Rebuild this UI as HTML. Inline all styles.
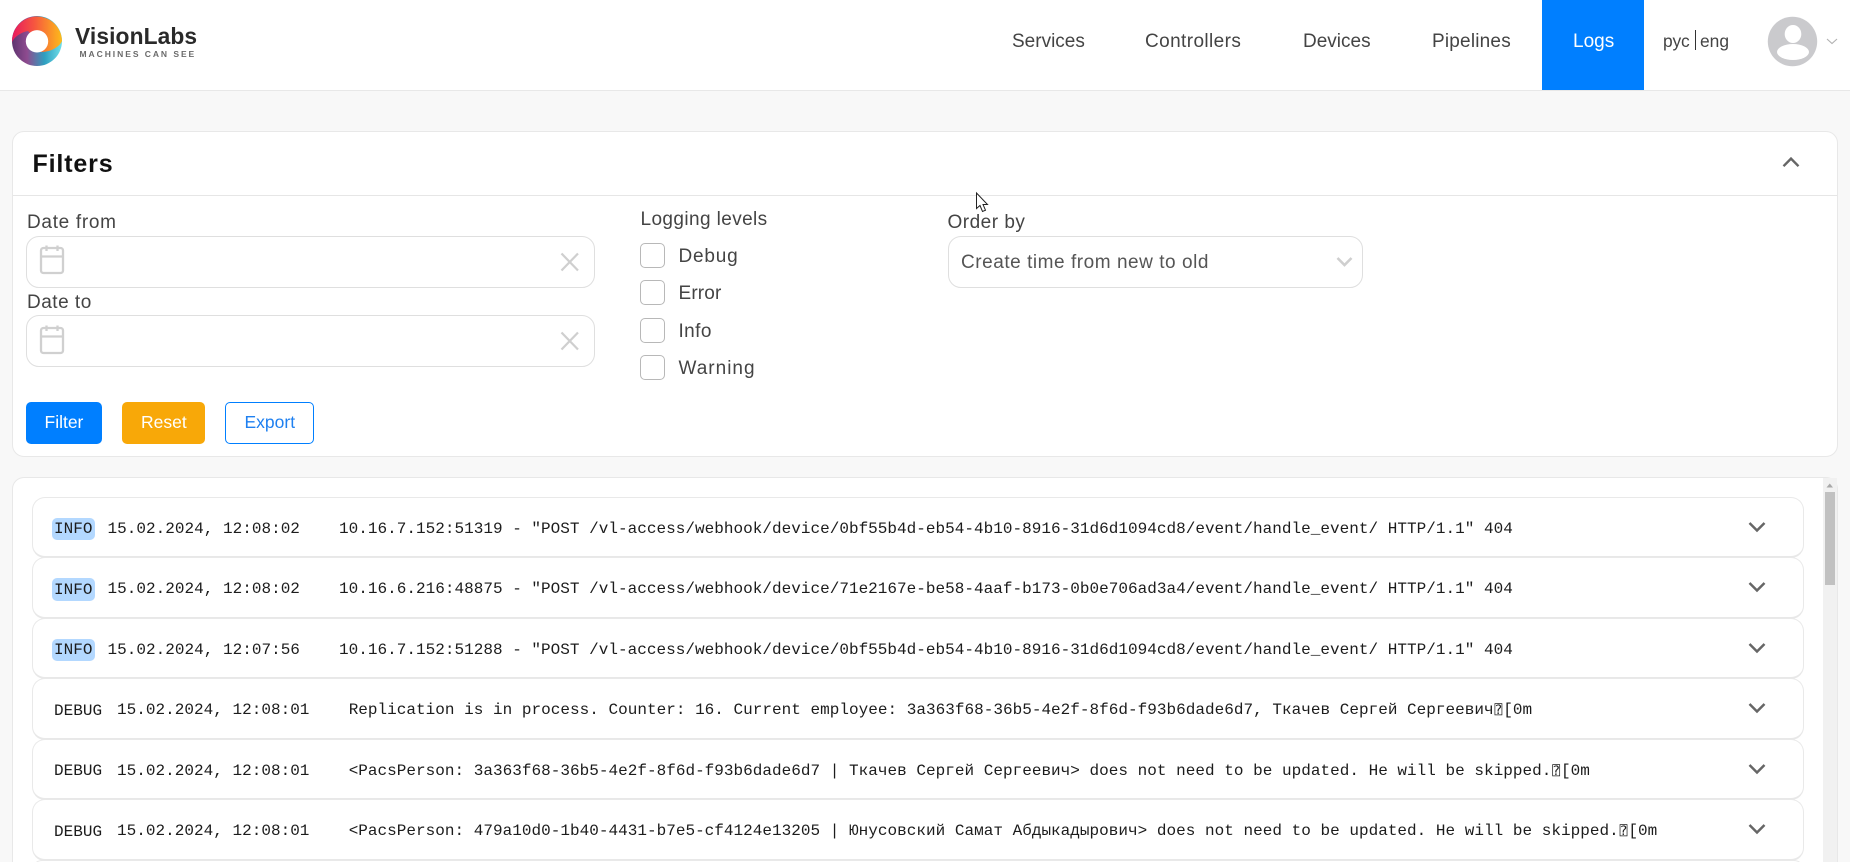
<!DOCTYPE html>
<html lang="en"><head><meta charset="utf-8"><title>VisionLabs Logs</title>
<style>
html,body{margin:0;padding:0;width:1850px;height:862px;overflow:hidden;background:#f8f8f8;font-family:"Liberation Sans","Noto Sans CJK SC",sans-serif;color:#333}
#w{position:relative;width:1850px;height:862px;overflow:hidden;background:#f8f8f8}
.a,.t,.m{position:absolute;white-space:pre}
.a{box-sizing:border-box}
.t{line-height:20px;font-size:19px;color:#444}
.m{line-height:20px;font-size:16px;font-family:"Liberation Mono","DejaVu Sans Mono",monospace;color:#1c1c1c;letter-spacing:.02px}
.q{font-family:"DejaVu Sans Mono",monospace;font-size:13px;width:9.6px;display:inline-block;text-align:center}
.input{border:1.5px solid #dfdfdf;border-radius:13px;background:#fff;height:52px}
.cb{left:640px;width:25px;height:25px;border:1.5px solid #b8b8b8;border-radius:5px;background:#fff}
.row{left:32px;width:1772px;height:61px;background:#fff;border:1.5px solid #e9e9e9;border-bottom:2.5px solid #e8e8e8;border-radius:13px}
.btn{top:402px;height:42px;border-radius:5px}
svg{position:absolute;overflow:visible}
</style></head><body><div id="w">

<div class="a" style="left:0;top:0;width:1850px;height:91px;background:#fff;border-bottom:1.5px solid #e8e8e8"></div>

<svg style="left:0;top:0" width="70" height="80" viewBox="0 0 70 80">
<defs>
<linearGradient id="l1" x1="0" x2="1" y1="0" y2="0"><stop offset="0" stop-color="#5e3470"/><stop offset=".3" stop-color="#8e4b8f"/><stop offset=".65" stop-color="#2f9fc0"/><stop offset="1" stop-color="#6fe0ea"/></linearGradient>
<linearGradient id="l2" x1="0" x2="1" y1="0" y2="0"><stop offset="0" stop-color="#e8185f"/><stop offset=".45" stop-color="#f6573f"/><stop offset="1" stop-color="#fdbb1a"/></linearGradient>
</defs>
<circle cx="37" cy="41" r="25" fill="url(#l1)"/>
<path d="M12 42A25 25 0 0 1 62 41C60 46 52 52 41 52L37 41L28 31C22 32 15 36 12 42Z" fill="url(#l2)"/>
<circle cx="37" cy="41.3" r="11.2" fill="#fff"/>
</svg>
<div class="t" style="left:75px;top:26px;font-size:22.8px;font-weight:bold;color:#2a2a2a;letter-spacing:.1px">VisionLabs</div>
<div class="t" style="left:79.5px;top:44px;font-size:8.5px;font-weight:bold;color:#6a6a6a;letter-spacing:1.95px">MACHINES CAN SEE</div>

<div class="t" style="left:1012px;top:32px">Services</div>
<div class="t" style="left:1145px;top:32px;letter-spacing:.4px">Controllers</div>
<div class="t" style="left:1303px;top:32px">Devices</div>
<div class="t" style="left:1432px;top:32px;letter-spacing:.2px">Pipelines</div>
<div class="a" style="left:1542px;top:0;width:102px;height:90px;background:#007fff"></div>
<div class="t" style="left:1573px;top:32px;color:#fff">Logs</div>
<div class="t" style="left:1663px;top:31px;font-size:17.4px">рус</div>
<div class="a" style="left:1695px;top:30px;width:1px;height:20px;background:#333"></div>
<div class="t" style="left:1700px;top:31px;font-size:17.4px">eng</div>
<svg style="left:1760px;top:10px" width="80" height="60" viewBox="0 0 80 60">
<circle cx="32.5" cy="31.5" r="24.7" fill="#cacacd"/>
<ellipse cx="33" cy="24" rx="8.3" ry="9" fill="#fff"/>
<ellipse cx="33" cy="42" rx="16" ry="8" fill="#fff"/>
<path d="M67 29l5 4.5l5-4.5" fill="none" stroke="#b0b0b0" stroke-width="1.1"/>
</svg>

<!-- Filters card -->
<div class="a" style="left:12px;top:131px;width:1826px;height:326px;background:#fff;border:1.5px solid #e8e8e8;border-radius:12px"></div>
<div class="a" style="left:13px;top:195px;width:1824px;height:1px;background:#e6e6e6"></div>
<div class="t" style="left:32.5px;top:154px;font-size:25px;font-weight:bold;color:#111;letter-spacing:.85px">Filters</div>
<svg style="left:1780px;top:155px" width="24" height="16" viewBox="0 0 24 16"><path d="M3.5 11.2L11 3.6L18.5 11.2" fill="none" stroke="#666" stroke-width="2.4"/></svg>

<div class="t" style="left:27px;top:213px;letter-spacing:.7px">Date from</div>
<div class="a input" style="left:26px;top:236px;width:569px"></div>
<svg style="left:30px;top:241px" width="50" height="40" viewBox="0 0 50 40" fill="none" stroke="#d0d0d0" stroke-width="2.3"><rect x="11" y="7" width="22" height="25" rx="2.5"/><path d="M11 15.5H33M16.5 4.5V10M27.5 4.5V10"/></svg>
<svg style="left:555px;top:248px" width="30" height="30" viewBox="0 0 30 30" fill="none" stroke="#cfcfcf" stroke-width="2.2"><path d="M6.5 5.5L23 22.5M23 5.5L6.5 22.5"/></svg>

<div class="t" style="left:27px;top:293px;letter-spacing:.5px">Date to</div>
<div class="a input" style="left:26px;top:315px;width:569px"></div>
<svg style="left:30px;top:321px" width="50" height="40" viewBox="0 0 50 40" fill="none" stroke="#d0d0d0" stroke-width="2.3"><rect x="11" y="7" width="22" height="25" rx="2.5"/><path d="M11 15.5H33M16.5 4.5V10M27.5 4.5V10"/></svg>
<svg style="left:555px;top:327px" width="30" height="30" viewBox="0 0 30 30" fill="none" stroke="#cfcfcf" stroke-width="2.2"><path d="M6.5 5.5L23 22.5M23 5.5L6.5 22.5"/></svg>

<div class="a btn" style="left:26px;width:76px;background:#007fff"></div>
<div class="t" style="left:44.5px;top:412px;font-size:17.5px;color:#fff">Filter</div>
<div class="a btn" style="left:122px;width:83px;background:#f8a808"></div>
<div class="t" style="left:141px;top:412px;font-size:17.5px;color:#fff">Reset</div>
<div class="a btn" style="left:225px;width:89px;background:#fff;border:1.5px solid #007fff"></div>
<div class="t" style="left:244.5px;top:412px;font-size:17.5px;color:#1f80f0">Export</div>

<div class="t" style="left:640.5px;top:210px;letter-spacing:.4px">Logging levels</div>
<div class="a cb" style="top:243px"></div><div class="t" style="left:678.5px;top:247px;letter-spacing:.8px">Debug</div>
<div class="a cb" style="top:280px"></div><div class="t" style="left:678.5px;top:284px;letter-spacing:.15px">Error</div>
<div class="a cb" style="top:318px"></div><div class="t" style="left:678.5px;top:322px;letter-spacing:.4px">Info</div>
<div class="a cb" style="top:355px"></div><div class="t" style="left:678.5px;top:359px;letter-spacing:1px">Warning</div>

<div class="t" style="left:947.5px;top:213px;letter-spacing:.5px">Order by</div>
<div class="a input" style="left:947.5px;top:236px;width:415.5px"></div>
<div class="t" style="left:961px;top:252.5px;letter-spacing:.54px;color:#555">Create time from new to old</div>
<svg style="left:1331px;top:252px" width="26" height="20" viewBox="0 0 26 20"><path d="M6.5 6L13.5 13L20.5 6" fill="none" stroke="#cfcfcf" stroke-width="2.6"/></svg>

<svg style="left:975px;top:192px" width="16" height="22" viewBox="0 0 16 22"><path d="M1.5 1V16.5L5 13.5L7.5 19.5L10.5 18.2L8 12.5H12.5Z" fill="#fff" stroke="#222" stroke-width="1"/></svg>

<!-- Log panel -->
<div class="a" style="left:12px;top:477px;width:1826px;height:385px;background:#fff;border:1.5px solid #e8e8e8;border-bottom:0;border-radius:12px 12px 0 0"></div>
<div class="a" style="left:1823px;top:478px;width:14px;height:384px;background:#f1f1f1"></div>
<div class="a" style="left:1825px;top:492px;width:10px;height:93px;background:#c1c1c1"></div>
<svg style="left:1823px;top:478px" width="14" height="14" viewBox="0 0 14 14"><path d="M3.5 9.5H10L6.8 5.5Z" fill="#a8a8a8"/></svg>

<div class="a row" style="top:497px"></div>
<div class="a row" style="top:557px;height:62px"></div>
<div class="a row" style="top:618px"></div>
<div class="a row" style="top:678px;height:62px"></div>
<div class="a row" style="top:739px"></div>
<div class="a row" style="top:799px;height:62px"></div>
<div class="a row" style="top:860px;height:10px;border-radius:13px 13px 0 0"></div>

<div class="a" style="left:52px;top:518px;width:43px;height:22px;background:#b3d8ff;border-radius:5px"></div>
<div class="m" style="left:54px;top:519px">INFO</div>
<div class="m" style="left:107.5px;top:519px">15.02.2024, 12:08:02</div>
<div class="m" style="left:339px;top:519px">10.16.7.152:51319 - "POST /vl-access/webhook/device/0bf55b4d-eb54-4b10-8916-31d6d1094cd8/event/handle_event/ HTTP/1.1" 404</div>

<div class="a" style="left:52px;top:578px;width:43px;height:23px;background:#b3d8ff;border-radius:5px"></div>
<div class="m" style="left:54px;top:580px">INFO</div>
<div class="m" style="left:107.5px;top:579px">15.02.2024, 12:08:02</div>
<div class="m" style="left:339px;top:579px">10.16.6.216:48875 - "POST /vl-access/webhook/device/71e2167e-be58-4aaf-b173-0b0e706ad3a4/event/handle_event/ HTTP/1.1" 404</div>

<div class="a" style="left:52px;top:639px;width:43px;height:22px;background:#b3d8ff;border-radius:5px"></div>
<div class="m" style="left:54px;top:640px">INFO</div>
<div class="m" style="left:107.5px;top:640px">15.02.2024, 12:07:56</div>
<div class="m" style="left:339px;top:640px">10.16.7.152:51288 - "POST /vl-access/webhook/device/0bf55b4d-eb54-4b10-8916-31d6d1094cd8/event/handle_event/ HTTP/1.1" 404</div>

<div class="m" style="left:54px;top:701px">DEBUG</div>
<div class="m" style="left:117px;top:700px">15.02.2024, 12:08:01</div>
<div class="m" style="left:348.7px;top:700px">Replication is in process. Counter: 16. Current employee: 3a363f68-36b5-4e2f-8f6d-f93b6dade6d7, Ткачев Сергей Сергеевич<span class="q">⍰</span>[0m</div>

<div class="m" style="left:54px;top:761px">DEBUG</div>
<div class="m" style="left:117px;top:761px">15.02.2024, 12:08:01</div>
<div class="m" style="left:348.7px;top:761px">&lt;PacsPerson: 3a363f68-36b5-4e2f-8f6d-f93b6dade6d7 | Ткачев Сергей Сергеевич&gt; does not need to be updated. He will be skipped.<span class="q">⍰</span>[0m</div>

<div class="m" style="left:54px;top:822px">DEBUG</div>
<div class="m" style="left:117px;top:821px">15.02.2024, 12:08:01</div>
<div class="m" style="left:348.7px;top:821px">&lt;PacsPerson: 479a10d0-1b40-4431-b7e5-cf4124e13205 | Юнусовский Самат Абдыкадырович&gt; does not need to be updated. He will be skipped.<span class="q">⍰</span>[0m</div>

<svg style="left:1745px;top:518px" width="24" height="20" viewBox="0 0 24 20"><path d="M4.5 5L12 12.5L19.5 5" fill="none" stroke="#666" stroke-width="2.5"/></svg>
<svg style="left:1745px;top:578px" width="24" height="20" viewBox="0 0 24 20"><path d="M4.5 5L12 12.5L19.5 5" fill="none" stroke="#666" stroke-width="2.5"/></svg>
<svg style="left:1745px;top:639px" width="24" height="20" viewBox="0 0 24 20"><path d="M4.5 5L12 12.5L19.5 5" fill="none" stroke="#666" stroke-width="2.5"/></svg>
<svg style="left:1745px;top:699px" width="24" height="20" viewBox="0 0 24 20"><path d="M4.5 5L12 12.5L19.5 5" fill="none" stroke="#666" stroke-width="2.5"/></svg>
<svg style="left:1745px;top:760px" width="24" height="20" viewBox="0 0 24 20"><path d="M4.5 5L12 12.5L19.5 5" fill="none" stroke="#666" stroke-width="2.5"/></svg>
<svg style="left:1745px;top:820px" width="24" height="20" viewBox="0 0 24 20"><path d="M4.5 5L12 12.5L19.5 5" fill="none" stroke="#666" stroke-width="2.5"/></svg>
</div></body></html>
